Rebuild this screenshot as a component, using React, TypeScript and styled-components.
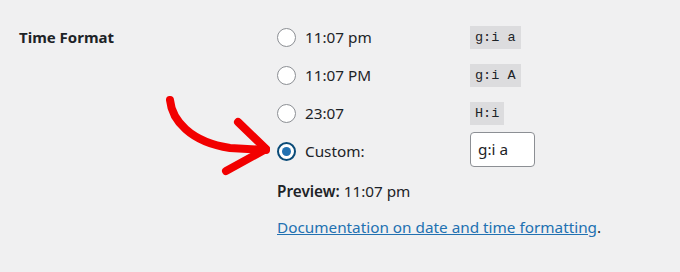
import React from 'react'
import styled, { createGlobalStyle } from 'styled-components'

const GlobalStyle = createGlobalStyle`
  html, body {
    margin: 0;
    padding: 0;
    background: #f0f0f1;
  }
  body {
    font-family: "Noto Sans", "Open Sans", sans-serif;
    color: #1d2327;
  }
`

const options = [
  { label: '11:07 pm', code: 'g:i a' },
  { label: '11:07 PM', code: 'g:i A' },
  { label: '23:07', code: 'H:i' },
]

const App = () => {
  return (
    <>
      <GlobalStyle />
      <Page>
        <Row>
          <Label>Time Format</Label>
          <Field>
            {options.map((o) => (
              <Option key={o.code}>
                <Choice>
                  <Radio />
                  <span>{o.label}</span>
                </Choice>
                <Code>{o.code}</Code>
              </Option>
            ))}
            <Option>
              <Choice>
                <Radio checked />
                <span>Custom:</span>
              </Choice>
              <Input defaultValue="g:i a" />
            </Option>
            <Preview>
              <strong>Preview:</strong> 11:07 pm
            </Preview>
            <Doc>
              <a href="#">Documentation on date and time formatting</a>.
            </Doc>
          </Field>
        </Row>
        <Arrow viewBox="0 0 120 90" width="120" height="90">
          <path
            d="M20 10 C 22 30, 40 52, 80 58 L 116 60"
            fill="none"
            stroke="#f20000"
            strokeWidth="8"
            strokeLinecap="round"
          />
          <path
            d="M88 32 L 116 59 L 76 81"
            fill="none"
            stroke="#f20000"
            strokeWidth="8"
            strokeLinecap="round"
            strokeLinejoin="round"
          />
        </Arrow>
      </Page>
    </>
  )
}

export default App

const Page = styled.div`
  position: relative;
  width: 680px;
  height: 272px;
  padding: 25px 0 0 19px;
  box-sizing: border-box;
`

const Row = styled.div`
  display: flex;
`

const Label = styled.div`
  width: 258px;
  font-weight: 700;
  font-size: 15px;
  line-height: 24px;
`

const Field = styled.div`
  display: flex;
  flex-direction: column;
  font-size: 15.3px;
`

const Option = styled.div`
  display: flex;
  align-items: center;
  height: 24px;
  margin-bottom: 14px;
`

const Choice = styled.label`
  width: 193px;
  display: flex;
  align-items: center;
  gap: 9px;
  line-height: 24px;
`

const Radio = styled.span<{ checked?: boolean }>`
  width: 19px;
  height: 19px;
  box-sizing: border-box;
  border-radius: 50%;
  background: #fff;
  border: ${(p) => (p.checked ? '2px solid #0a4b78' : '1px solid #8c8f94')};
  display: flex;
  align-items: center;
  justify-content: center;

  &::after {
    content: '';
    display: ${(p) => (p.checked ? 'block' : 'none')};
    width: 9px;
    height: 9px;
    border-radius: 50%;
    background: #2271b1;
  }
`

const Code = styled.code`
  font-family: "Liberation Mono", "DejaVu Sans Mono", monospace;
  font-size: 13.5px;
  background: #dcdcde;
  padding: 3px 5px;
  line-height: 17px;
  color: #1d2327;
`

const Input = styled.input`
  width: 65px;
  height: 35px;
  margin-top: -4px;
  box-sizing: border-box;
  border: 1px solid #8c8f94;
  border-radius: 4px;
  padding: 0 7px;
  font-family: "Noto Sans", "Open Sans", sans-serif;
  font-size: 15.3px;
  color: #1d2327;
  background: #fff;
`

const Preview = styled.p`
  margin: 2px 0 0;
  line-height: 24px;
  strong {
    font-weight: 600;
  }
`

const Doc = styled.p`
  margin: 12px 0 0;
  line-height: 24px;
  a {
    color: #2271b1;
    text-decoration: underline;
  }
`

const Arrow = styled.svg`
  position: absolute;
  left: 150px;
  top: 90px;
`
